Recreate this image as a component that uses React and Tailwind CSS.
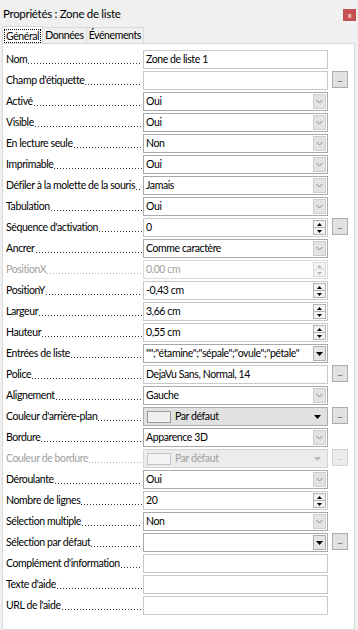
import React from "react";

const rows = [
  { label: "Nom", type: "text", value: "Zone de liste 1" },
  { label: "Champ d'étiquette", type: "text", value: "", btn: true },
  { label: "Activé", type: "select", value: "Oui" },
  { label: "Visible", type: "select", value: "Oui" },
  { label: "En lecture seule", type: "select", value: "Non" },
  { label: "Imprimable", type: "select", value: "Oui" },
  { label: "Défiler à la molette de la souris", type: "select", value: "Jamais" },
  { label: "Tabulation", type: "select", value: "Oui" },
  { label: "Séquence d'activation", type: "spin", value: "0", btn: true },
  { label: "Ancrer", type: "select", value: "Comme caractère" },
  { label: "PositionX", type: "spin", value: "0,00 cm", disabled: true },
  { label: "PositionY", type: "spin", value: "-0,43 cm" },
  { label: "Largeur", type: "spin", value: "3,66 cm" },
  { label: "Hauteur", type: "spin", value: "0,55 cm" },
  { label: "Entrées de liste", type: "drop", value: "\"\";\"étamine\";\"sépale\";\"ovule\";\"pétale\"" },
  { label: "Police", type: "text", value: "DejaVu Sans, Normal, 14", btn: true },
  { label: "Alignement", type: "select", value: "Gauche" },
  { label: "Couleur d'arrière-plan", type: "color", value: "Par défaut", btn: true },
  { label: "Bordure", type: "select", value: "Apparence 3D" },
  { label: "Couleur de bordure", type: "color", value: "Par défaut", btn: true, disabled: true },
  { label: "Déroulante", type: "select", value: "Oui" },
  { label: "Nombre de lignes", type: "spin", value: "20" },
  { label: "Sélection multiple", type: "select", value: "Non" },
  { label: "Sélection par défaut", type: "drop", value: "", btn: true },
  { label: "Complément d'information", type: "text", value: "" },
  { label: "Texte d'aide", type: "text", value: "" },
  { label: "URL de l'aide", type: "text", value: "" },
];

const Chevron = () => (
  <svg width="7" height="5" viewBox="0 0 7 5">
    <path d="M0.5 1 L3.5 4 L6.5 1" fill="none" stroke="#8a8a8a" strokeWidth="1" />
  </svg>
);

const Triangle = ({ color = "#000" }) => (
  <svg width="7" height="4" viewBox="0 0 7 4">
    <path d="M0 0 H7 L3.5 4 Z" fill={color} />
  </svg>
);

const SpinButtons = ({ disabled }) => {
  const c = disabled ? "#b5b5b5" : "#000";
  return (
    <div
      className={`w-[13px] h-[15px] mr-[1px] flex flex-col border bg-[#f3f3f3] ${
        disabled ? "border-[#dadada]" : "border-[#b4b4b4]"
      }`}
    >
      <div
        className={`flex-1 flex items-center justify-center border-b ${
          disabled ? "border-[#dadada]" : "border-[#b4b4b4]"
        }`}
      >
        <svg width="5" height="3" viewBox="0 0 5 3">
          <path d="M0 3 H5 L2.5 0 Z" fill={c} />
        </svg>
      </div>
      <div className="flex-1 flex items-center justify-center">
        <svg width="5" height="3" viewBox="0 0 5 3">
          <path d="M0 0 H5 L2.5 3 Z" fill={c} />
        </svg>
      </div>
    </div>
  );
};

const Field = ({ row }) => {
  const textColor = row.disabled ? "text-[#a0a0a0]" : "text-black";

  if (row.type === "text") {
    return (
      <div className="w-[185px] h-[19px] border border-[#c9c9c9] bg-white flex items-center pl-[2px]">
        <span className={textColor}>{row.value}</span>
      </div>
    );
  }

  if (row.type === "select") {
    return (
      <div className="w-[185px] h-[19px] border border-[#a9a9a9] bg-white flex items-center">
        <span className={`flex-1 pl-[2px] ${textColor}`}>{row.value}</span>
        <div className="w-[13px] h-[15px] mr-[1px] bg-[#e3e3e3] border border-[#cdcdcd] flex items-center justify-center">
          <Chevron />
        </div>
      </div>
    );
  }

  if (row.type === "spin") {
    return (
      <div
        className={`w-[185px] h-[19px] border bg-white flex items-center ${
          row.disabled ? "border-[#dcdcdc]" : "border-[#c9c9c9]"
        }`}
      >
        <span className={`flex-1 pl-[2px] ${textColor}`}>{row.value}</span>
        <SpinButtons disabled={row.disabled} />
      </div>
    );
  }

  if (row.type === "drop") {
    return (
      <div className="w-[185px] h-[19px] border border-[#a9a9a9] bg-white flex items-center">
        <span className="flex-1 min-w-0 pl-[2px] whitespace-nowrap">{row.value}</span>
        <div className="w-[13px] h-[15px] mr-[1px] bg-[#e6e6e6] border border-[#adadad] flex items-center justify-center">
          <Triangle />
        </div>
      </div>
    );
  }

  // color button
  return (
    <div
      className={`w-[185px] h-[19px] border flex items-center ${
        row.disabled ? "bg-[#ececec] border-[#d4d4d4]" : "bg-[#e1e1e1] border-[#adadad]"
      }`}
    >
      <div
        className={`ml-[3px] w-[24px] h-[12px] border ${
          row.disabled ? "border-[#c4c4c4] bg-[#f4f4f4]" : "border-[#9a9a9a] bg-[#f0f0f0]"
        }`}
      />
      <span className={`flex-1 pl-[4px] ${textColor}`}>{row.value}</span>
      <div className="mr-[6px]">
        <Triangle color={row.disabled ? "#b8b8b8" : "#000"} />
      </div>
    </div>
  );
};

const DotButton = ({ disabled }) => (
  <div
    className={`w-[16px] h-[17px] border flex items-center justify-center text-[8px] leading-none pb-[2px] ${
      disabled
        ? "bg-[#ececec] border-[#d4d4d4] text-[#b0b0b0]"
        : "bg-[#e1e1e1] border-[#adadad] text-[#333]"
    }`}
  >
    ...
  </div>
);

const Row = ({ row }) => (
  <div className="h-[21px] flex items-start">
    <div
      className={`w-[137px] h-[19px] flex items-center whitespace-nowrap ${
        row.disabled ? "text-[#a0a0a0]" : "text-black"
      }`}
    >
      <span className="shrink-0">{row.label}</span>
      {/* dotted leader */}
      <div
        className={`flex-1 h-[1px] self-end mb-[5px] ml-[1px] mr-[1px] bg-repeat-x bg-[length:3px_1px] ${
          row.disabled
            ? "bg-[linear-gradient(to_right,#b0b0b0_1px,transparent_1px)]"
            : "bg-[linear-gradient(to_right,#3a3a3a_1px,transparent_1px)]"
        }`}
      />
    </div>
    <Field row={row} />
    {row.btn && (
      <div className="ml-[4px]">
        <DotButton disabled={row.disabled} />
      </div>
    )}
  </div>
);

const App = () => {
  return (
    <div
      className="w-[358px] h-[630px] bg-[#f0f0f0] overflow-hidden flex flex-col text-[10.5px] tracking-[-0.4px] text-black"
      style={{ fontFamily: "Lato, 'Liberation Sans', sans-serif" }}
    >
      {/* Title bar */}
      <div className="h-[26px] flex items-start justify-between pl-[3px] pr-[2px] pt-[5px]">
        <span className="text-[11.5px] tracking-[-0.3px]">Propriétés : Zone de liste</span>
        <div className="mt-[4px] w-[13px] h-[12px] bg-[#c75050] text-white text-[8px] leading-none flex items-center justify-center">
          x
        </div>
      </div>

      {/* Tabs */}
      <div className="h-[17px] flex items-end pl-[2px]">
        <div className="h-[17px] px-[1px] pt-[1px] bg-white border border-b-0 border-[#d9d9d9] flex items-center">
          <span className="border border-dotted border-black px-[1px] leading-[12px]">Général</span>
        </div>
        <div className="h-[16px] px-[2px] bg-[#f0f0f0] border border-l-0 border-b-0 border-[#d9d9d9] flex items-center">
          Données
        </div>
        <div className="h-[16px] px-[2px] bg-[#f0f0f0] border border-l-0 border-b-0 border-[#d9d9d9] flex items-center">
          Événements
        </div>
      </div>

      {/* Panel */}
      <div className="flex-1 ml-[2px] mr-[3px] bg-white border border-[#d9d9d9] pl-[3px] pt-[6px]">
        {rows.map((row) => (
          <Row key={row.label} row={row} />
        ))}
      </div>
    </div>
  );
};

export default App;
